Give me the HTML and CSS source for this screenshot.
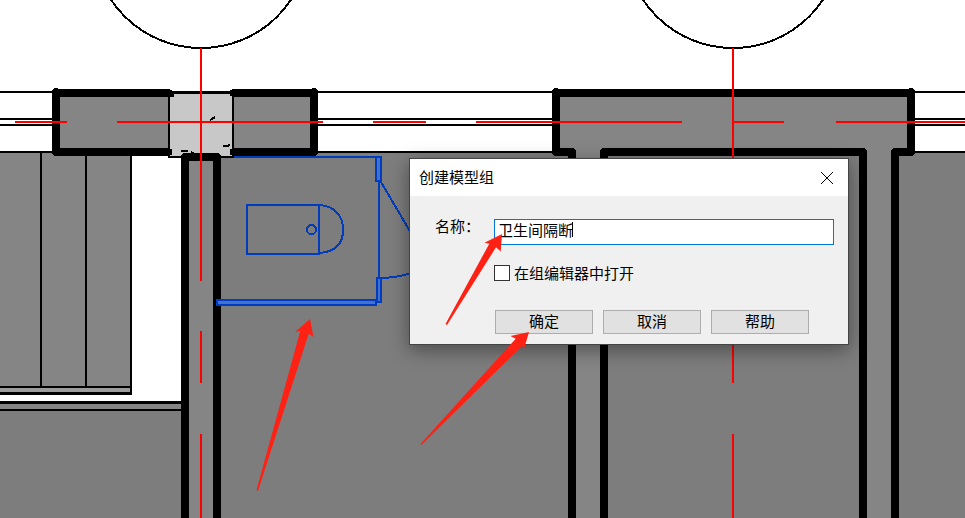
FILE: index.html
```html
<!DOCTYPE html>
<html lang="zh-CN">
<head>
<meta charset="utf-8">
<title>创建模型组</title>
<link rel="stylesheet" href="styles.css">
</head>
<body>
<main class="workspace">
  <svg class="plan" viewBox="0 0 965 518" preserveAspectRatio="xMinYMin slice" aria-hidden="true">
    <!-- floors -->
    <g class="floor">
      <rect x="0" y="410" width="182" height="108"/>
      <rect x="220" y="152" width="745" height="366"/>
    </g>
    <g class="wall">
      <rect x="0" y="152" width="131" height="235"/>
      <rect x="0" y="403" width="182" height="7"/>
    </g>
    <rect class="step" x="0" y="388" width="130" height="4"/>
    <!-- window and stair lines -->
    <g class="ink">
      <path d="M0 91H52V93H0zM0 118H52V120H0zM0 124H52V126H0zM0 151H52V153H0z"/>
      <path d="M40 153H42V387H40zM85 153H87V387H85zM130 153H132V395H130zM0 386H132V388H0zM0 392H132V395H0zM0 401H182V404H0zM0 409H182V411H0z"/>
    </g>
    <path class="paper" d="M318 89H552V151H318zM914 89H965V151H914z"/>
    <path class="ink" d="M317 91H553V93H317zM317 118H553V120H317zM317 124H553V126H317zM317 151H553V153H317zM914 91H965V93H914zM914 118H965V120H914zM914 124H965V126H914zM914 151H965V153H914z"/>
    <!-- walls -->
    <path class="wall" d="M56 93H314V152H56zM185 157H217V518H185zM556 93H911V152H895V518H863V152H604V518H572V152H556z"/>
    <rect class="column" x="169" y="93" width="64" height="64"/>
    <g class="cut">
      <path d="M170 93H56V152H170M232 93H314V152H232"/>
      <path d="M185 518V157H217V518"/>
      <path d="M572 518V152H556V93H911V152H895V518M604 518V152H863V518"/>
      <path d="M56 92V94M314 92V94M556 92V94M911 92V94"/>
    </g>
    <path class="ink" d="M170 91H232V94H170zM168 93H170V158H168zM232 93H234V158H232zM168 156H182V158H168zM220 156H234V158H220zM170 90H172V97H170zM170 149H172V155H170zM230 90H232V96H230zM230 149H232V155H230z"/>
    <path class="mark" d="M210 120L212 119L215 117M223 146H227L230 145M181 151H188M191 152L195 154M170 96H173V94"/>
    <!-- grid bubbles and axes -->
    <g class="bubble">
      <circle cx="201" cy="-60" r="108"/>
      <circle cx="733" cy="-60" r="108"/>
    </g>
    <path class="axis" d="M201 48V281M201 331V383M201 434V518M733 48V281M733 331V383M733 434V518M15 122H67M117 122H323M373 122H426M476 122H682M733 122H784M836 122H965"/>
    <!-- cubicle -->
    <g class="panel">
      <rect x="376" y="157" width="5" height="24"/>
      <rect x="377" y="278" width="4" height="24"/>
      <rect x="217" y="300" width="159" height="5"/>
    </g>
    <g class="fixture">
      <path d="M234 157H376M379 181V278M247 205H319V254H247zM319 205C335 206 343 216 343 230C343 244 335 252 319 253M381 182L411 233M380 278C392 278 402 276 411 273"/>
      <circle cx="311.500" cy="229.500" r="4.500"/>
    </g>
  </svg>

  <form class="dialog" role="dialog" aria-labelledby="dialog-title">
    <header class="titlebar">
      <h1 class="title" id="dialog-title">创建模型组</h1>
      <button class="close" type="button" aria-label="关闭">
        <svg class="close-icon" viewBox="0 0 12 12" aria-hidden="true"><path d="M0 0L12 12M12 0L0 12"/></svg>
      </button>
    </header>
    <div class="content">
      <div class="name-row">
        <label class="name-label" for="group-name">名称：</label>
        <input class="name-input" id="group-name" type="text" value="卫生间隔断">
      </div>
      <div class="option">
        <input class="check" id="open-editor" type="checkbox">
        <label for="open-editor">在组编辑器中打开</label>
      </div>
      <div class="actions">
        <button class="action" type="button">确定</button>
        <button class="action" type="button">取消</button>
        <button class="action" type="button">帮助</button>
      </div>
    </div>
  </form>

  <svg class="plan notes" viewBox="0 0 965 518" preserveAspectRatio="xMinYMin slice" aria-hidden="true">
    <rect class="ink" x="572" y="222" width="1" height="15"/>
    <g class="arrow">
      <path d="M310 319L295 332L300.300 331L256.500 490L258 491L308.700 333.700L313.500 337z"/>
      <path d="M529 332L510.500 336L515.700 338.700L420.500 444L421.500 445L522.300 345.500L523.700 350z"/>
      <path d="M502 234L484.500 242.700L489.300 243.700L445.500 324L447 325L496 247.300L500.700 251.500z"/>
    </g>
  </svg>
</main>
</body>
</html>
```
FILE: styles.css
```css
* {
  box-sizing: border-box;
}

body {
  margin: 0;
  background: #fff;
  color: #000;
  font: 15px/20px "Noto Sans CJK SC", sans-serif;
}

.workspace {
  position: relative;
  height: 100vh;
  overflow: hidden;
}

.plan {
  display: block;
  width: 100%;
  height: 100%;
  shape-rendering: crispEdges;
}

.notes {
  position: absolute;
  inset: 0;
  pointer-events: none;
}

.floor { fill: #7d7d7d; }
.wall { fill: #858585; }
.step { fill: #9c9c9c; }
.paper { fill: #fff; }
.column { fill: #c8c8c8; }
.ink { fill: #000; }

.cut {
  fill: none;
  stroke: #000;
  stroke-width: 8;
  stroke-linejoin: round;
}

.cut path:last-child {
  stroke-linecap: round;
}

.mark,
.bubble {
  fill: none;
  stroke: #000;
  stroke-width: 2;
}

.axis {
  fill: none;
  stroke: #f00;
  stroke-width: 2;
}

.panel {
  fill: #4471d0;
  stroke: #003cbe;
  stroke-width: 2;
}

.fixture {
  fill: none;
  stroke: #003cbe;
  stroke-width: 2;
}

.arrow {
  fill: #ff2113;
  shape-rendering: geometricPrecision;
}

.dialog {
  position: absolute;
  top: 158px;
  left: 409px;
  width: 440px;
  border: 1px solid #444;
  background: #f0f0f0;
  box-shadow: 0 5px 18px rgba(0, 0, 0, 0.4);
}

.titlebar {
  display: flex;
  align-items: center;
  justify-content: space-between;
  height: 37px;
  padding-left: 9px;
  background: #fff;
}

.title {
  margin: 0;
  padding-bottom: 2px;
  font-size: 15px;
  font-weight: 400;
}

.close {
  display: grid;
  place-items: center;
  width: 42px;
  height: 36px;
  padding: 0;
  border: 0;
  background: none;
}

.close-icon {
  width: 12px;
  height: 12px;
  overflow: visible;
  fill: none;
  stroke: #000;
}

.content {
  padding: 23px 14px 10px 25px;
}

.name-row {
  display: flex;
}

.name-label {
  width: 59px;
  line-height: 14px;
}

.name-input {
  flex: 1;
  min-width: 0;
  height: 26px;
  padding: 0 3px 6px;
  border: 1px solid #0078d7;
  outline: 0;
  background: #fff;
  color: #000;
  font: inherit;
  line-height: 18px;
}

.option {
  display: flex;
  align-items: center;
  gap: 4px;
  margin: 18px 0 27px 59px;
}

.check {
  appearance: none;
  width: 16px;
  height: 16px;
  margin: 0;
  border: 1px solid #333;
  background: #fff;
}

.actions {
  display: flex;
  gap: 10px;
  margin-left: 60px;
}

.action {
  width: 98px;
  height: 24px;
  padding: 0 0 2px;
  border: 1px solid #adadad;
  background: #e1e1e1;
  color: #000;
  font: inherit;
}
```
